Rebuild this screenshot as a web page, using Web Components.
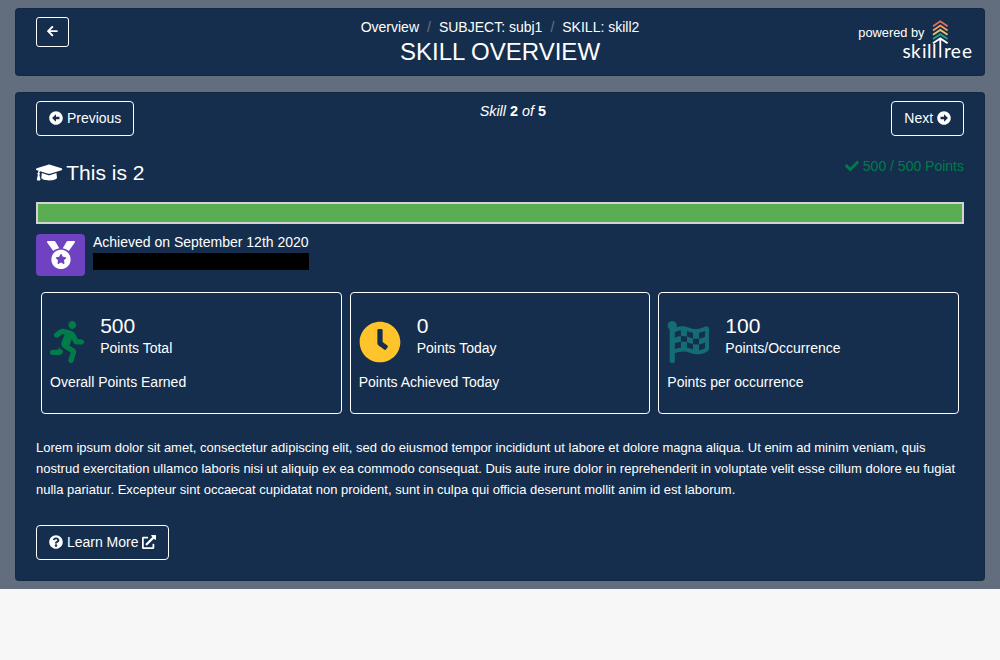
<!DOCTYPE html>
<html lang="en"><head><meta charset="utf-8"><title>Skill Overview</title>
<style>html,body{margin:0;background:#f7f7f7;font:14px/21px "Liberation Sans",Arial,sans-serif;color:#fff}</style></head>
<body><skill-page></skill-page>
<script>
const ICONS={
'arrow-left':[448,'M257.5 445.1l-22.2 22.2c-9.4 9.4-24.6 9.4-33.9 0L7 273c-9.4-9.4-9.4-24.6 0-33.9L201.4 44.7c9.4-9.4 24.6-9.4 33.9 0l22.2 22.2c9.5 9.5 9.3 25-.4 34.3L136.6 216H424c13.3 0 24 10.7 24 24v32c0 13.3-10.7 24-24 24H136.6l120.5 114.8c9.8 9.3 10 24.8.4 34.3z'],
'circle-left':[512,'M256 504C119 504 8 393 8 256S119 8 256 8s248 111 248 248-111 248-248 248zm116-292H256v-70.9c0-10.7-13-16.1-20.5-8.5L121.2 247.5c-4.7 4.7-4.7 12.2 0 16.9l114.3 114.9c7.6 7.6 20.5 2.2 20.5-8.5V300h116c6.6 0 12-5.4 12-12v-64c0-6.6-5.4-12-12-12z'],
'check':[512,'M173.898 439.404l-166.4-166.4c-9.997-9.997-9.997-26.206 0-36.204l36.203-36.204c9.997-9.998 26.207-9.998 36.204 0L192 312.69 432.095 72.596c9.997-9.997 26.207-9.997 36.204 0l36.203 36.204c9.997 9.997 9.997 26.206 0 36.204l-294.4 294.401c-9.998 9.997-26.207 9.997-36.204-.001z'],
'cap':[640,'M622.34 153.2L343.4 67.5c-15.2-4.67-31.6-4.67-46.79 0L17.66 153.2c-23.54 7.23-23.54 38.36 0 45.59l48.63 14.94c-10.67 13.19-17.23 29.28-17.88 46.9C38.78 266.15 32 276.11 32 288c0 10.78 5.68 19.85 13.86 25.65L20.33 428.53C18.11 438.52 25.71 448 35.94 448h56.11c10.24 0 17.84-9.48 15.62-19.47L82.14 313.65C90.32 307.85 96 298.78 96 288c0-11.57-6.47-21.25-15.66-26.87.76-15.02 8.44-28.3 20.69-36.72L296.6 284.5c9.06 2.78 26.44 6.25 46.79 0l278.95-85.7c23.55-7.24 23.55-38.36 0-45.6zM352.79 315.09c-28.53 8.76-52.84 3.92-65.59 0l-145.02-44.55L128 384c0 35.35 85.96 64 192 64s192-28.65 192-64l-14.18-113.47-145.03 44.56z'],
'medal':[512,'M223.75 130.75L154.62 15.54A31.997 31.997 0 0 0 127.18 0H16.03C3.08 0-4.5 14.57 2.92 25.18l111.27 158.96c29.72-27.77 67.52-46.83 109.56-53.39zM495.97 0H384.82c-11.24 0-21.66 5.9-27.44 15.54l-69.13 115.21c42.04 6.56 79.84 25.62 109.56 53.38L509.08 25.18C516.5 14.57 508.92 0 495.97 0zM256 160c-97.2 0-176 78.8-176 176s78.8 176 176 176 176-78.8 176-176-78.8-176-176-176zm92.52 157.26l-37.93 36.96 8.97 52.22c1.6 9.36-8.26 16.51-16.65 12.09L256 393.88l-46.9 24.65c-8.4 4.45-18.25-2.74-16.65-12.09l8.97-52.22-37.93-36.96c-6.82-6.64-3.05-18.23 6.35-19.59l52.43-7.64 23.43-47.52c2.11-4.28 6.19-6.39 10.28-6.39 4.11 0 8.22 2.14 10.33 6.39l23.43 47.52 52.43 7.64c9.4 1.36 13.17 12.95 6.35 19.59z'],
'running':[416,'M272 96c26.51 0 48-21.49 48-48S298.51 0 272 0s-48 21.49-48 48 21.49 48 48 48zM113.69 317.47l-14.8 34.52H32c-17.67 0-32 14.33-32 32s14.33 32 32 32h77.45c19.25 0 36.58-11.44 44.11-29.09l8.79-20.52-10.67-6.3c-17.32-10.23-30.06-25.37-37.99-42.61zM384 223.99h-44.03l-26.06-53.25c-12.5-25.55-35.45-44.23-61.78-50.94l-71.08-21.14c-28.3-6.8-57.77-.55-80.84 17.14l-39.67 30.41c-14.03 10.75-16.69 30.83-5.94 44.86s30.84 16.69 44.86 5.94l39.67-30.41c7.67-5.89 17.44-8 25.27-6.14l14.7 4.37-37.46 87.39c-12.62 29.48-1.31 64.01 26.3 80.31l84.98 50.17-27.47 87.73c-5.28 16.86 4.11 34.82 20.97 40.09 3.19 1 6.41 1.48 9.58 1.48 13.61 0 26.23-8.77 30.52-22.45l31.64-101.06c5.91-20.77-2.89-43.08-21.64-54.39l-61.24-36.14 31.31-78.28 20.27 41.43c8 16.34 24.92 26.89 43.11 26.89H384c17.67 0 32-14.33 32-32s-14.33-31.99-32-31.99z'],
'clock':[512,'M256,8C119,8,8,119,8,256S119,504,256,504,504,393,504,256,393,8,256,8Zm92.49,313h0l-20,25a16,16,0,0,1-22.49,2.5h0l-67-49.72a40,40,0,0,1-15-31.23V112a16,16,0,0,1,16-16h32a16,16,0,0,1,16,16V256l58,42.5A16,16,0,0,1,348.49,321Z'],
'flag':[512,'M243.2 189.9V258c26.1 5.9 49.3 15.6 73.6 22.3v-68.2c-26-5.8-49.4-15.5-73.6-22.2zm223.3-123c-34.3 15.9-76.5 31.9-117 31.9C296 98.8 251.7 64 184.3 64c-25 0-47.3 4.4-68 12 2.8-7.3 4.1-15.2 3.6-23.6C118.1 24 94.8 1.2 66.3 0 34.3-1.3 8 24.3 8 56c0 19 9.5 35.8 24 45.9V488c0 13.3 10.7 24 24 24h16c13.3 0 24-10.7 24-24v-94.4c28.3-12.1 63.6-22.1 114.4-22.1 53.6 0 97.8 34.8 165.2 34.8 48.2 0 86.7-16.3 122.5-40.9 8.7-6 13.8-15.8 13.8-26.4V95.9c.1-23.3-24.2-38.8-45.4-29zM169.6 325.5c-25.8 2.7-50 8.2-73.6 16.6v-70.5c26.2-9.3 47.5-15 73.6-17.4v71.3zM464 191c-23.6 9.8-46.3 19.5-73.6 23.9V286c24.8-3.4 51.4-11.8 73.6-26v70.5c-25.1 16.1-48.5 24.7-73.6 27.1V286c-27 3.7-47.9 1.5-73.6-5.6v67.4c-23.9-7.4-47.3-16.7-73.6-21.3V258c-19.7-4.4-40.8-6.8-73.6-3.8v-70c-22.4 3.1-44.6 10.2-73.6 20.9v-70.5c33.2-12.2 50.1-19.8 73.6-22v71.6c27-3.7 48.4-1.3 73.6 5.7v-67.4c23.7 7.4 47.2 16.7 73.6 21.3v68.4c23.7 5.3 47.6 6.9 73.6 2.7V143c27-4.8 52.3-13.6 73.6-22.5z'],
'question':[512,'M504 256c0 136.997-111.043 248-248 248S8 392.997 8 256C8 119.083 119.043 8 256 8s248 111.083 248 248zM262.655 90c-54.497 0-89.255 22.957-116.549 63.758-3.536 5.286-2.353 12.415 2.715 16.258l34.699 26.31c5.205 3.947 12.621 3.008 16.665-2.122 17.864-22.658 30.113-35.797 57.303-35.797 20.429 0 45.698 13.148 45.698 32.958 0 14.976-12.363 22.667-32.534 33.976C247.128 238.528 216 254.941 216 296v4c0 6.627 5.373 12 12 12h56c6.627 0 12-5.373 12-12v-1.333c0-28.462 83.186-29.647 83.186-106.667 0-58.002-60.165-102-116.531-102zM256 338c-25.365 0-46 20.635-46 46 0 25.364 20.635 46 46 46s46-20.636 46-46c0-25.365-20.635-46-46-46z'],
'external':[512,'M432,320H400a16,16,0,0,0-16,16V448H64V128H208a16,16,0,0,0,16-16V80a16,16,0,0,0-16-16H48A48,48,0,0,0,0,112V464a48,48,0,0,0,48,48H400a48,48,0,0,0,48-48V336A16,16,0,0,0,432,320ZM488,0h-128c-21.37,0-32.05,25.91-17,41l35.73,35.73L135,320.37a24,24,0,0,0,0,34L157.67,377a24,24,0,0,0,34,0L435.28,133.32,471,169c15,15,41,4.5,41-17V24A24,24,0,0,0,488,0Z']
};
const define=(name,html)=>customElements.define(name,class extends HTMLElement{
  connectedCallback(){if(!this.shadowRoot)this.attachShadow({mode:'open'}).innerHTML=typeof html==='function'?html(this):html}
});
define('fa-icon',el=>{const flip=el.getAttribute('name')==='circle-right';const [w,d]=ICONS[flip?'circle-left':el.getAttribute('name')];
return `<style>:host{display:inline-block;height:1em;width:${w/512}em;flex:none;vertical-align:-.125em}svg{display:block;width:100%;height:100%;overflow:visible${flip?';transform:scaleX(-1)':''}}</style><svg viewBox="0 0 ${w} 512"><path fill="currentColor" d="${d}"/></svg>`});
define('app-panel',`<style>:host{display:block;box-sizing:border-box;background:#152e4d;border:1px solid rgba(0,0,0,.125);border-radius:4px;padding:8px 20px}</style><slot></slot>`);
define('outline-button',`<style>:host{display:inline-block}button{display:flex;align-items:center;gap:3.9px;box-sizing:border-box;height:35px;padding:0 12px;border:1px solid #fff;border-radius:4px;background:none;color:inherit;font:inherit}:host([small]) button{height:30px;padding:0 10.1px;font-size:12.25px;border-radius:3px}::slotted(fa-icon){margin-bottom:1px}</style><button><slot></slot></button>`);
define('bread-crumbs',`<style>:host{display:flex;justify-content:center}i{font-style:normal;color:#6c757d;padding:0 8px}</style><span>Overview</span><i>/</i><span>SUBJECT: subj1</span><i>/</i><span>SKILL: skill2</span>`);
define('tree-logo',`<style>:host{display:block;width:70px;height:40px}svg{display:block;overflow:visible}text{font-family:Lato,sans-serif;font-size:19px;fill:#fff}</style>
<svg width="70" height="40" viewBox="0 0 70 40" fill="none" stroke-width="1.8"><path stroke="#e76f51" d="M31 6.2 38.3 1.3l7.3 4.9"/><path stroke="#f4a261" d="M31 10.5 38.3 5.6l7.3 4.9"/><path stroke="#e9c46a" d="M31 14.8 38.3 9.9l7.3 4.9"/><path stroke="#2a9d8f" d="M31 19.1 38.3 14.2l7.3 4.9"/><path stroke="#fff" d="M31 23.3 38.3 18.4l7.3 4.9M38.3 18.4V37.5"/><text x="0.6 9.1 20 25 30" y="37.5">skill</text><text x="42 48.7 60" y="37.5">ree</text></svg>`);
define('page-header',`<style>:host{display:block}.g{display:grid;grid-template-columns:1fr auto 1fr;height:50px}h1{font-size:24px;line-height:27px;font-weight:400;margin:0;text-align:center}.l{line-height:0}.r{display:flex;justify-content:flex-end;margin-right:-8px}.p{font-size:12.8px;line-height:20px;padding-top:6px;margin-right:-22.5px}tree-logo{margin-top:3px}</style>
<div class="g"><div class="l"><outline-button small><fa-icon name="arrow-left"></fa-icon></outline-button></div><div><bread-crumbs></bread-crumbs><h1>SKILL OVERVIEW</h1></div><div class="r"><span class="p">powered by</span><tree-logo></tree-logo></div></div>`);
define('stat-card',el=>`<style>:host{display:block;box-sizing:border-box;height:122px;border:1px solid #fff;border-radius:4px;padding:20px 8px}.t{display:flex}fa-icon{font-size:42px;margin:8px 16px 0 0;color:${el.getAttribute('color')}}.v{font-size:21px;line-height:25px}.d{margin-top:9px}</style><div class="t"><fa-icon name="${el.getAttribute('icon')}"></fa-icon><div><div class="v">${el.getAttribute('value')}</div><div>${el.getAttribute('label')}</div></div></div><div class="d"><slot></slot></div>`);
define('skill-progress',`<style>:host{display:block;box-sizing:border-box;height:22px;border:2px solid lightgray;background:#59ad52}</style>`);
define('achievement-note',`<style>:host{display:flex;gap:8px}.b{box-sizing:border-box;width:49px;height:42px;border-radius:4px;background:#6f42c1;display:flex;align-items:center;justify-content:center;font-size:28px}.x{height:17px;background:#000;margin-top:3px}.t{line-height:16px}</style><div class="b"><fa-icon name="medal"></fa-icon></div><div><div class="t">Achieved on September 12th 2020</div><div class="x"></div></div>`);
define('skill-detail',`<style>:host{display:block;height:471px}.nav{display:flex;justify-content:space-between;height:35px}em{font-size:14.4px}em b{font-style:normal}.head{display:flex;justify-content:space-between;margin-top:20px;height:46px}h2{display:flex;gap:4px;align-items:center;margin:4px 0 0;font-weight:400;font-size:21px;line-height:25px;height:25px}.pts{color:#007c49}achievement-note{margin-top:10px}.stats{display:grid;grid-template-columns:repeat(3,1fr);gap:8px;margin:16px 5px 0}p{font-size:13px;line-height:21px;margin:23px 0 25px;white-space:nowrap}</style>
<div class="nav"><outline-button><fa-icon name="circle-left"></fa-icon><span>Previous</span></outline-button><em>Skill <b>2</b> of <b>5</b></em><outline-button><span>Next</span><fa-icon name="circle-right"></fa-icon></outline-button></div>
<div class="head"><h2><fa-icon name="cap"></fa-icon><span>This is 2</span></h2><div class="pts"><fa-icon name="check"></fa-icon> 500 / 500 Points</div></div>
<skill-progress></skill-progress><achievement-note></achievement-note>
<div class="stats"><stat-card icon="running" color="#007c49" value="500" label="Points Total">Overall Points Earned</stat-card><stat-card icon="clock" color="#ffc42b" value="0" label="Points Today">Points Achieved Today</stat-card><stat-card icon="flag" color="#146c75" value="100" label="Points/Occurrence">Points per occurrence</stat-card></div>
<p>Lorem ipsum dolor sit amet, consectetur adipiscing elit, sed do eiusmod tempor incididunt ut labore et dolore magna aliqua. Ut enim ad minim veniam, quis<br>nostrud exercitation ullamco laboris nisi ut aliquip ex ea commodo consequat. Duis aute irure dolor in reprehenderit in voluptate velit esse cillum dolore eu fugiat<br>nulla pariatur. Excepteur sint occaecat cupidatat non proident, sunt in culpa qui officia deserunt mollit anim id est laborum.</p>
<outline-button><fa-icon name="question"></fa-icon><span>Learn More</span><fa-icon name="external"></fa-icon></outline-button>`);
define('skill-page',`<style>:host{display:flex;flex-direction:column;gap:16px;box-sizing:border-box;height:589px;padding:8px 15px;background:#626d7d}</style><app-panel><page-header></page-header></app-panel><app-panel><skill-detail></skill-detail></app-panel>`);
</script></body></html>
